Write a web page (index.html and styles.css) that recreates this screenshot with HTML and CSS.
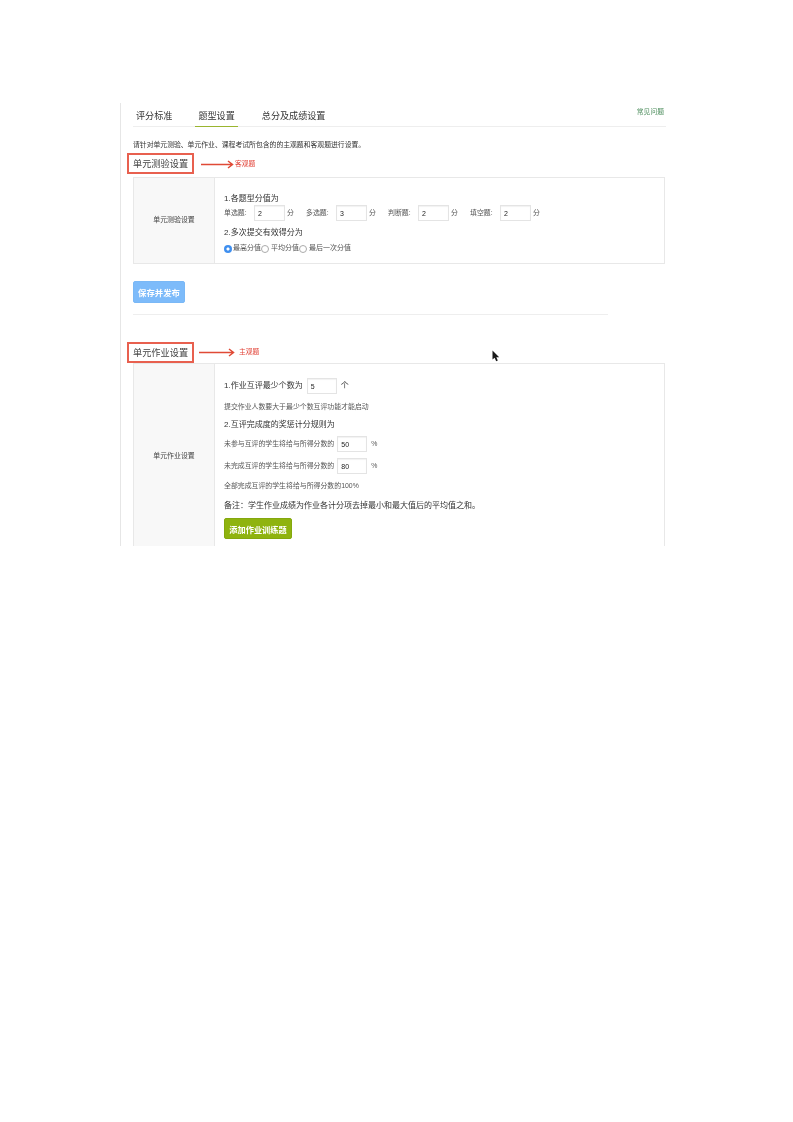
FILE: index.html
```html
<!DOCTYPE html>
<html lang="zh">
<head>
<meta charset="utf-8">
<title>题型设置</title>
<link rel="stylesheet" href="styles.css">
</head>
<body>
<main class="shot">
  <nav class="tabs">
    <a class="tab">评分标准</a>
    <a class="tab tab-active">题型设置</a>
    <a class="tab">总分及成绩设置</a>
    <a class="faq">常见问题</a>
  </nav>
  <p class="intro">请针对单元测验、单元作业、课程考试所包含的的主观题和客观题进行设置。</p>

  <header class="head head-quiz">
    <h2 class="title">单元测验设置</h2>
    <svg class="arrow" width="33" height="9" viewBox="0 0 33 9"><path d="M0 4.500H31M27 1l4.500 3.500L27 8" fill="none" stroke="#e04a36" stroke-width="1.500"/></svg>
    <span class="note">客观题</span>
  </header>
  <section class="panel panel-quiz">
    <div class="side">单元测验设置</div>
    <div class="body">
      <p class="big big-a">1.各题型分值为</p>
      <div class="scores">
        <span class="small lbl">单选题:</span><span class="inp">2</span><span class="small unit">分</span>
        <span class="small lbl">多选题:</span><span class="inp">3</span><span class="small unit">分</span>
        <span class="small lbl">判断题:</span><span class="inp">2</span><span class="small unit">分</span>
        <span class="small lbl">填空题:</span><span class="inp">2</span><span class="small unit">分</span>
      </div>
      <p class="big big-b">2.多次提交有效得分为</p>
      <div class="radios">
        <i class="radio radio-on"></i><span class="small opt opt-first">最高分值</span>
        <i class="radio"></i><span class="small opt">平均分值</span>
        <i class="radio"></i><span class="small opt">最后一次分值</span>
      </div>
    </div>
  </section>
  <button class="btn btn-blue">保存并发布</button>
  <hr class="rule">

  <header class="head head-work">
    <h2 class="title">单元作业设置</h2>
    <svg class="arrow arrow-work" width="36" height="9" viewBox="0 0 36 9"><path d="M0 4.500H34M30 1l4.500 3.500L30 8" fill="none" stroke="#e04a36" stroke-width="1.500"/></svg>
    <span class="note note-work">主观题</span>
  </header>
  <section class="panel panel-work">
    <div class="side">单元作业设置</div>
    <div class="body body-work">
      <div class="line line-count"><span class="big">1.作业互评最少个数为</span><span class="inp inp-count">5</span><span class="big">个</span></div>
      <p class="small gap-a">提交作业人数要大于最少个数互评功能才能启动</p>
      <p class="big gap-b">2.互评完成度的奖惩计分规则为</p>
      <div class="line gap-c"><span class="small">未参与互评的学生将给与所得分数的</span><span class="inp inp-rate">50</span><span class="small">%</span></div>
      <div class="line gap-d"><span class="small">未完成互评的学生将给与所得分数的</span><span class="inp inp-rate">80</span><span class="small">%</span></div>
      <p class="small gap-e">全部完成互评的学生将给与所得分数的100%</p>
      <p class="big gap-f">备注：学生作业成绩为作业各计分项去掉最小和最大值后的平均值之和。</p>
      <button class="btn btn-green">添加作业训练题</button>
    </div>
  </section>
  <svg class="cursor" width="8" height="12" viewBox="0 0 8 12"><path d="M0.500 0.500V9.500L2.600 7.800L4.200 11.300L5.800 10.600L4.300 7.200H7.200Z" fill="#1a1a1a"/></svg>
</main>
</body>
</html>
```
FILE: styles.css
```css
* { box-sizing: border-box; }
html, body { margin: 0; padding: 0; background: #fff; }
body { height: 1122px; font-family: "Liberation Sans", "Noto Sans CJK SC", sans-serif; overflow: hidden; }
p, h2 { margin: 0; }

.shot {
  position: relative;
  margin: 103px 0 0 120px;
  width: 546px;
  height: 443px;
  overflow: hidden;
  border-left: 1px solid #e6e6e6;
  padding-left: 12px;
  color: #444;
  filter: blur(0.4px);
}

.tabs { display: flex; align-items: flex-start; height: 24px; border-bottom: 1px solid #eee; }
.tab { font-size: 9.100px; line-height: 12px; height: 24px; padding: 7px 3px 0; margin-right: 20px; color: #333; }
.tab-active { border-bottom: 1px solid #9ab52f; margin-right: 21px; }
.faq { margin-left: auto; margin-right: 2px; font-size: 6.800px; line-height: 10px; margin-top: 4px; color: #4f8f5f; }

.intro { font-size: 6.830px; line-height: 10px; margin-top: 13px; color: #333; }

.head { display: flex; align-items: center; height: 21px; margin-left: -6px; }
.head-quiz { margin-top: 3px; }
.head-work { margin-top: 27px; }
.title {
  width: 67px;
  height: 21px;
  border: 2px solid #e8604f;
  font-weight: 400;
  font-size: 9.200px;
  line-height: 18px;
  padding-left: 4px;
  color: #444;
  white-space: nowrap;
}
.arrow { margin-left: 7px; margin-top: 1px; flex: none; }
.arrow-work { margin-left: 5px; margin-top: 0; }
.note { font-size: 6.800px; margin-left: 1px; margin-top: -1px; color: #e2453a; }
.note-work { margin-left: 4px; margin-top: -4px; }

.panel { display: flex; border: 1px solid #e8e8e8; width: 532px; }
.panel-quiz { height: 87px; margin-top: 3px; }
.panel-work { height: 200px; margin-top: 0; }
.side {
  width: 81px;
  flex: none;
  display: flex;
  align-items: center;
  justify-content: center;
  background: #f8f8f8;
  border-right: 1px solid #e8e8e8;
  font-size: 6.900px;
  color: #444;
}
.panel-quiz .side { padding-bottom: 4px; }
.panel-work .side { padding-bottom: 2px; height: 183px; align-self: flex-start; }
.body { padding-left: 9px; flex: 1; }

.big { font-size: 8px; line-height: 12px; color: #333; white-space: nowrap; }
.small { font-size: 6.900px; line-height: 10px; color: #555; white-space: nowrap; }
.big-a { margin-top: 15px; }
.big-b { margin-top: 6px; }

.inp {
  display: inline-block;
  width: 31px;
  height: 16px;
  flex: none;
  border: 1px solid #e4e4e4;
  box-shadow: inset 0 1px 1px #f2f2f2;
  background: #fff;
  font-size: 7px;
  line-height: 15px;
  padding-left: 3px;
  color: #222;
}

.scores { display: flex; align-items: center; margin-top: 0; }
.lbl { width: 30px; }
.unit { width: 21px; padding-left: 2px; }

.radios { display: flex; align-items: center; margin-top: 4px; }
.radio { width: 8px; height: 8px; border-radius: 50%; border: 1px solid #aaa; background: #fff; flex: none; margin-top: 2px; }
.opt { font-size: 7px; margin-left: 2px; margin-top: -1px; }
.opt-first { margin-left: 1px; }
.radio-on { border: 0; background: radial-gradient(circle, #fff 0 1.300px, #3f8fef 1.800px); }

.btn { display: block; border-radius: 2px; font-family: inherit; font-weight: 700; color: #fff; padding: 0; }
.btn-blue {
  width: 52px;
  height: 22px;
  margin-top: 17px;
  border: 1px solid #7ab8f6;
  background: #7dbbfa;
  font-size: 8.400px;
}
.btn-green {
  width: 68px;
  height: 21px;
  margin-top: 6px;
  border: 1px solid #84a80e;
  background: #8fb30f;
  font-size: 8.200px;
}

.rule { border: 0; border-top: 1px solid #eee; width: 475px; margin: 11px 0 0; }

.body-work { padding-top: 14px; }
.line { display: flex; align-items: center; }
.line-count { gap: 4px; }
.inp-count { width: 30px; }
.inp-rate { width: 30px; margin: 0 4px 0 3px; }
.gap-a { margin-top: 8px; }
.gap-b { margin-top: 7px; }
.gap-c { margin-top: 5px; }
.gap-d { margin-top: 6px; }
.gap-e { margin-top: 7px; }
.gap-f { margin-top: 9px; }

.cursor { position: absolute; left: 371px; top: 247px; }
```
